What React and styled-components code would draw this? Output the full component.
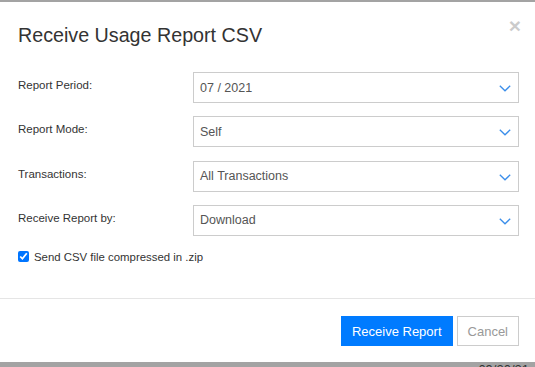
import React from 'react';
import styled, { createGlobalStyle } from 'styled-components';

const Global = createGlobalStyle`
  html, body { margin: 0; padding: 0; }
  body {
    width: 535px;
    height: 367px;
    overflow: hidden;
    background: #9b9b9b;
    font-family: "Liberation Sans", Arial, sans-serif;
  }
  * { box-sizing: border-box; }
`;

const Backdrop = styled.div`
  position: relative;
  width: 535px;
  height: 367px;
  padding-top: 2px;
  background: #a3a3a3;
  overflow: hidden;
`;

const Modal = styled.div`
  position: relative;
  height: 360px;
  background: #fff;
  display: flex;
  flex-direction: column;
`;

const Header = styled.div`
  padding: 22px 18px 0;
`;

const Title = styled.h4`
  margin: 0;
  font-size: 19.7px;
  line-height: 22px;
  font-weight: normal;
  color: #333;
`;

const Close = styled.button`
  position: absolute;
  top: 13px;
  right: 14px;
  border: 0;
  background: none;
  padding: 0;
  font-family: "Liberation Sans", Arial, sans-serif;
  font-size: 21px;
  font-weight: bold;
  line-height: 1;
  color: #000;
  opacity: 0.2;
  cursor: pointer;
`;

const Body = styled.div`
  flex: 1;
  padding: 26px 16px 0 18px;
`;

const Form = styled.div`
  display: grid;
  grid-template-columns: 175px 1fr;
  row-gap: 13.3px;
`;

const Label = styled.label`
  font-size: 11.5px;
  line-height: 16px;
  padding-top: 5px;
  color: #333;
`;

const SelectBox = styled.div`
  position: relative;
  height: 31px;
  border: 1px solid #cccccc;
  display: flex;
  align-items: center;
  padding: 0 28px 0 6px;
  font-size: 12.5px;
  color: #555;
  background: #fff;
`;

const Chevron = styled.svg`
  position: absolute;
  right: 7px;
  top: 12px;
`;

const CheckRow = styled.label`
  display: flex;
  align-items: center;
  gap: 5px;
  margin-top: 15px;
  font-size: 11.4px;
  color: #333;
`;

const Check = styled.input`
  width: 11px;
  height: 11px;
  margin: 0;
  accent-color: #0075ff;
`;

const Footer = styled.div`
  border-top: 1px solid #e5e5e5;
  padding: 17px 16px 0 18px;
  height: 64px;
  display: flex;
  justify-content: flex-end;
  gap: 4px;
`;

const Button = styled.button`
  height: 30px;
  padding: 0 10px;
  font-family: "Liberation Sans", Arial, sans-serif;
  font-size: 13px;
  border: 1px solid ${p => (p.$primary ? '#007bff' : '#cccccc')};
  background: ${p => (p.$primary ? '#007bff' : '#fff')};
  color: ${p => (p.$primary ? '#fff' : '#999')};
  cursor: pointer;
`;

const Behind = styled.div`
  position: absolute;
  right: 6px;
  top: 363px;
  font-size: 13px;
  line-height: 14px;
  color: #333;
`;

const fields = [
  { label: 'Report Period:', value: '07 / 2021' },
  { label: 'Report Mode:', value: 'Self' },
  { label: 'Transactions:', value: 'All Transactions' },
  { label: 'Receive Report by:', value: 'Download' },
];

function Select({ value }) {
  return (
    <SelectBox>
      {value}
      <Chevron width="12" height="7" viewBox="0 0 12 7">
        <path d="M0.8 0.8 L6 5.8 L11.2 0.8" fill="none" stroke="#3b8eea" strokeWidth="1.3" />
      </Chevron>
    </SelectBox>
  );
}

export default function App() {
  return (
    <>
      <Global />
      <Backdrop>
        <Modal>
          <Header>
            <Title>Receive Usage Report CSV</Title>
            <Close aria-label="Close">×</Close>
          </Header>
          <Body>
            <Form>
              {fields.map(f => (
                <React.Fragment key={f.label}>
                  <Label>{f.label}</Label>
                  <Select value={f.value} />
                </React.Fragment>
              ))}
            </Form>
            <CheckRow>
              <Check type="checkbox" defaultChecked />
              Send CSV file compressed in .zip
            </CheckRow>
          </Body>
          <Footer>
            <Button $primary>Receive Report</Button>
            <Button>Cancel</Button>
          </Footer>
        </Modal>
        <Behind>09/20/21</Behind>
      </Backdrop>
    </>
  );
}
